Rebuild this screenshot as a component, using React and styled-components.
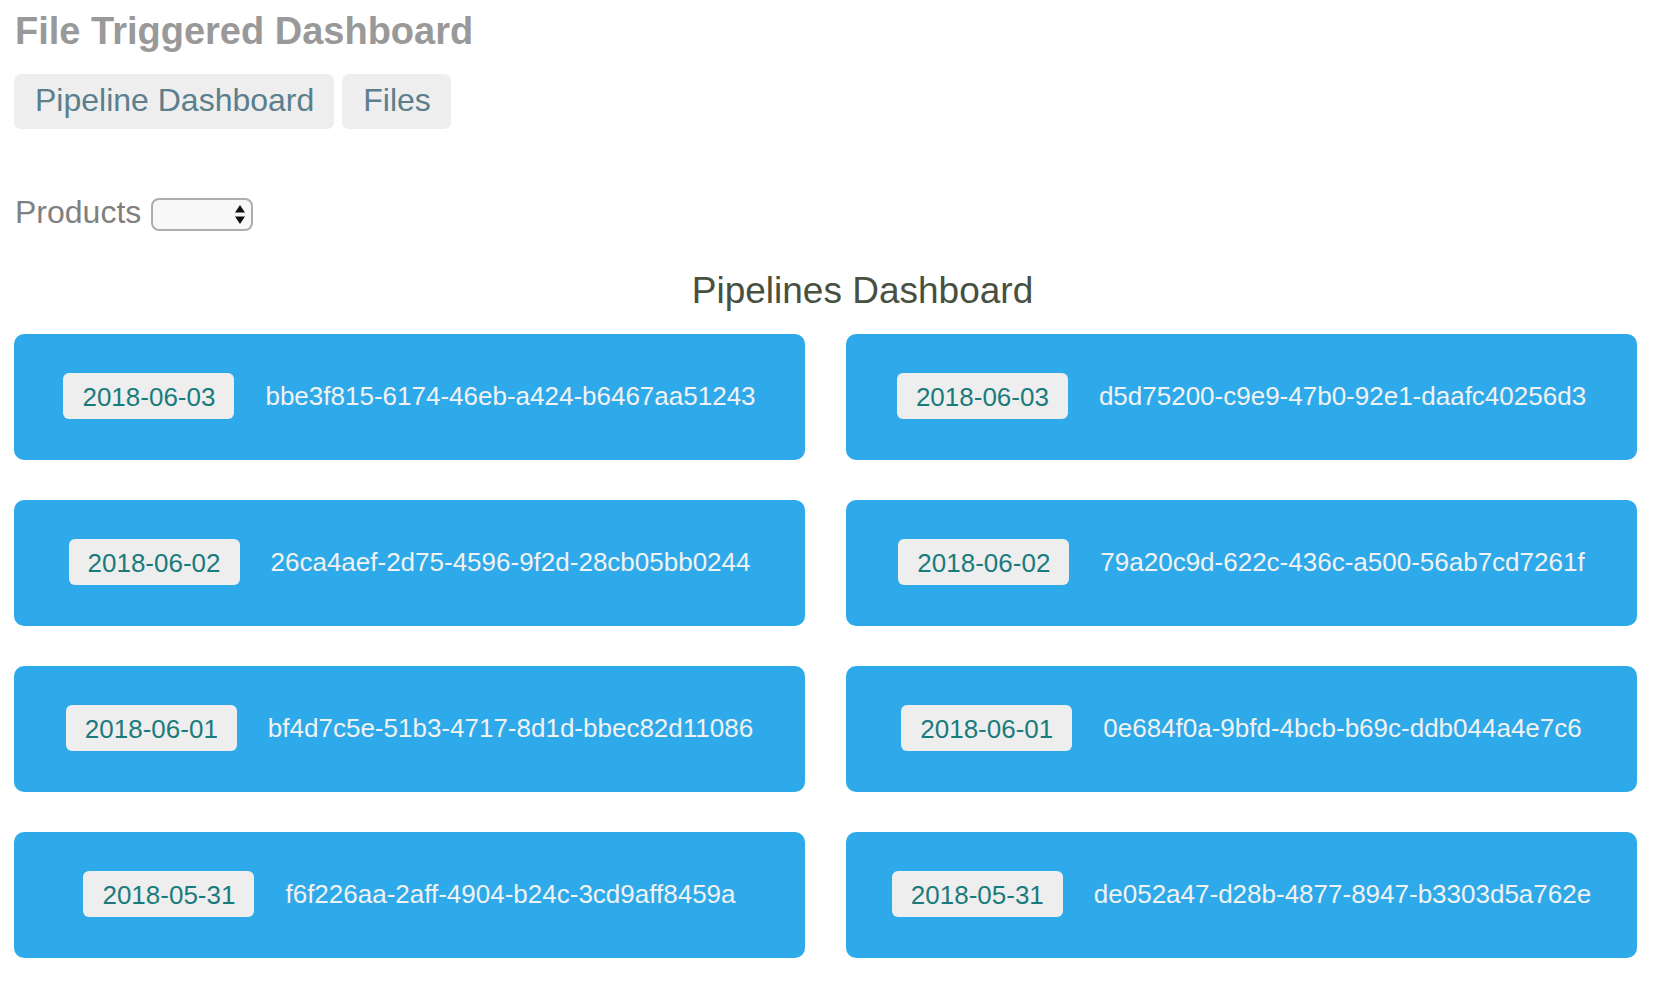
import React from 'react';
import styled, { createGlobalStyle } from 'styled-components';

const GlobalStyle = createGlobalStyle`
  body {
    margin: 0;
    background: #ffffff;
    font-family: "Liberation Sans", Arial, sans-serif;
  }
`;

const Page = styled.div`
  padding: 12px 29px 24px 14px;
`;

const Title = styled.h1`
  margin: 0 0 24px 1px;
  font-size: 38px;
  line-height: 1;
  font-weight: 700;
  color: #999999;
`;

const Nav = styled.nav`
  display: flex;
  gap: 8px;
`;

const NavButton = styled.button`
  font-family: inherit;
  font-size: 32px;
  line-height: 1;
  padding: 10px 20px 13px 21px;
  border: none;
  border-radius: 7px;
  background: #eeeeee;
  color: #5b7f8c;
  cursor: pointer;
`;

const FilterRow = styled.div`
  display: flex;
  align-items: flex-start;
  gap: 10px;
  margin-top: 67px;
`;

const Label = styled.label`
  font-size: 32px;
  line-height: 1;
  color: #808080;
  margin-left: 1px;
`;

const SelectWrap = styled.div`
  position: relative;
  margin-top: 2px;
`;

const Select = styled.select`
  appearance: none;
  width: 102px;
  height: 33px;
  border: 2px solid #adadad;
  border-radius: 8px;
  background: #f8f8f8;
  outline: none;
`;

const Arrows = styled.svg`
  position: absolute;
  right: 8px;
  top: 7px;
  pointer-events: none;
`;

const Heading = styled.h2`
  margin: 41px 0 25px;
  padding-left: 74px;
  text-align: center;
  font-size: 37px;
  line-height: 1;
  font-weight: 400;
  color: #48503f;
`;

const Grid = styled.div`
  display: grid;
  grid-template-columns: 1fr 1fr;
  column-gap: 41px;
  row-gap: 40px;
`;

const Card = styled.div`
  height: 126px;
  box-sizing: border-box;
  padding-bottom: 3px;
  border-radius: 10px;
  background: #2eaaea;
  display: flex;
  align-items: center;
  justify-content: center;
  gap: 31px;
`;

const DateBadge = styled.span`
  font-size: 26px;
  line-height: 1;
  padding: 11px 19px 9px;
  border-radius: 6px;
  background: #eeeeee;
  color: #1a7b7d;
`;

const RunId = styled.span`
  font-size: 26px;
  line-height: 1;
  color: #f2f2f2;
`;

const runs = [
  ['2018-06-03', 'bbe3f815-6174-46eb-a424-b6467aa51243'],
  ['2018-06-03', 'd5d75200-c9e9-47b0-92e1-daafc40256d3'],
  ['2018-06-02', '26ca4aef-2d75-4596-9f2d-28cb05bb0244'],
  ['2018-06-02', '79a20c9d-622c-436c-a500-56ab7cd7261f'],
  ['2018-06-01', 'bf4d7c5e-51b3-4717-8d1d-bbec82d11086'],
  ['2018-06-01', '0e684f0a-9bfd-4bcb-b69c-ddb044a4e7c6'],
  ['2018-05-31', 'f6f226aa-2aff-4904-b24c-3cd9aff8459a'],
  ['2018-05-31', 'de052a47-d28b-4877-8947-b3303d5a762e'],
];

const App = () => {
  return (
    <Page>
      <GlobalStyle />
      <Title>File Triggered Dashboard</Title>
      <Nav>
        <NavButton>Pipeline Dashboard</NavButton>
        <NavButton>Files</NavButton>
      </Nav>

      <FilterRow>
        <Label htmlFor="products">Products</Label>
        <SelectWrap>
          <Select id="products" defaultValue="">
            <option value=""></option>
          </Select>
          <Arrows width="10" height="19" viewBox="0 0 10 19">
            <polygon points="5,0 10,7.5 0,7.5" fill="#111" />
            <polygon points="0,11.5 10,11.5 5,19" fill="#111" />
          </Arrows>
        </SelectWrap>
      </FilterRow>

      <Heading>Pipelines Dashboard</Heading>

      <Grid>
        {runs.map(([date, id]) => (
          <Card key={id}>
            <DateBadge>{date}</DateBadge>
            <RunId>{id}</RunId>
          </Card>
        ))}
      </Grid>
    </Page>
  );
};

export default App;
